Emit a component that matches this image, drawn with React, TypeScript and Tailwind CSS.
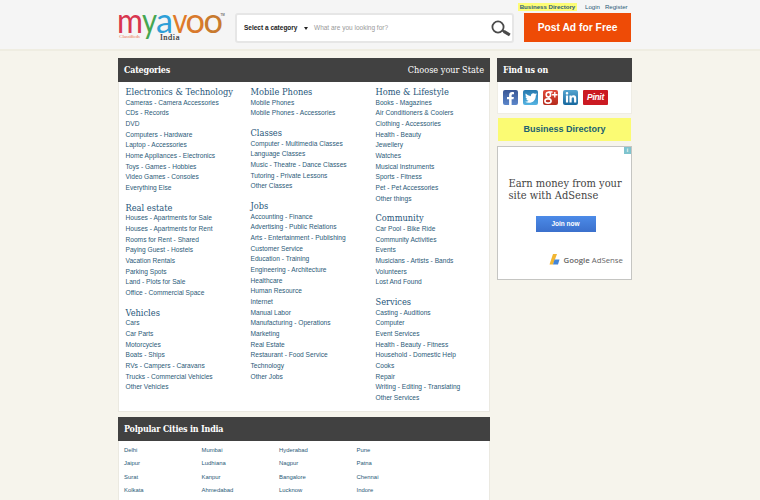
import React from "react";
import { FaFacebookF, FaTwitter } from "react-icons/fa";
import { FaLinkedinIn } from "react-icons/fa6";

type Section = { title: string; items: string[] };

const columns: Section[][] = [
  [
    { title: "Electronics & Technology", items: ["Cameras - Camera Accessories", "CDs - Records", "DVD", "Computers - Hardware", "Laptop - Accessories", "Home Appliances - Electronics", "Toys - Games - Hobbies", "Video Games - Consoles", "Everything Else"] },
    { title: "Real estate", items: ["Houses - Apartments for Sale", "Houses - Apartments for Rent", "Rooms for Rent - Shared", "Paying Guest - Hostels", "Vacation Rentals", "Parking Spots", "Land - Plots for Sale", "Office - Commercial Space"] },
    { title: "Vehicles", items: ["Cars", "Car Parts", "Motorcycles", "Boats - Ships", "RVs - Campers - Caravans", "Trucks - Commercial Vehicles", "Other Vehicles"] },
  ],
  [
    { title: "Mobile Phones", items: ["Mobile Phones", "Mobile Phones - Accessories"] },
    { title: "Classes", items: ["Computer - Multimedia Classes", "Language Classes", "Music - Theatre - Dance Classes", "Tutoring - Private Lessons", "Other Classes"] },
    { title: "Jobs", items: ["Accounting - Finance", "Advertising - Public Relations", "Arts - Entertainment - Publishing", "Customer Service", "Education - Training", "Engineering - Architecture", "Healthcare", "Human Resource", "Internet", "Manual Labor", "Manufacturing - Operations", "Marketing", "Real Estate", "Restaurant - Food Service", "Technology", "Other Jobs"] },
  ],
  [
    { title: "Home & Lifestyle", items: ["Books - Magazines", "Air Conditioners & Coolers", "Clothing - Accessories", "Health - Beauty", "Jewellery", "Watches", "Musical Instruments", "Sports - Fitness", "Pet - Pet Accessories", "Other things"] },
    { title: "Community", items: ["Car Pool - Bike Ride", "Community Activities", "Events", "Musicians - Artists - Bands", "Volunteers", "Lost And Found"] },
    { title: "Services", items: ["Casting - Auditions", "Computer", "Event Services", "Health - Beauty - Fitness", "Household - Domestic Help", "Cooks", "Repair", "Writing - Editing - Translating", "Other Services"] },
  ],
];

const cities = ["Delhi", "Mumbai", "Hyderabad", "Pune", "Jaipur", "Ludhiana", "Nagpur", "Patna", "Surat", "Kanpur", "Bangalore", "Chennai", "Kolkata", "Ahmedabad", "Lucknow", "Indore"];

const serif = "font-['DejaVu_Serif_Condensed','DejaVu_Serif',serif] [font-stretch:condensed]";

const letters = [
  { c: "m", x: -1, w: 26, color: "#d8364f" },
  { c: "y", x: 24, w: 15, color: "#45a651" },
  { c: "a", x: 38, w: 17, color: "#2e9fd8" },
  { c: "v", x: 54.5, w: 15, color: "#e07a28" },
  { c: "o", x: 67.5, w: 19.5, color: "#d97a2c" },
  { c: "o", x: 85.5, w: 19.5, color: "#c87a2e" },
];

function Logo() {
  return (
    <svg className="h-[40px] w-[110px] shrink-0 overflow-visible" viewBox="0 0 110 40">
      {letters.map((l, i) => (
        <text key={i} x={l.x} y="25" textLength={l.w} lengthAdjust="spacingAndGlyphs" fill={l.color} className="font-['Lato',sans-serif] text-[34px]">{l.c}</text>
      ))}
      <text x="1" y="30" textLength="21" fill="#f0a088" className="font-['Liberation_Serif',serif] text-[5px] font-bold">Classifieds</text>
      <text x="42" y="32" textLength="19.5" fill="#333" stroke="#333" strokeWidth="0.2" className="font-['Liberation_Serif',serif] text-[8.5px]">India</text>
      <text x="102.5" y="8" fill="#777" className="font-['Liberation_Sans',sans-serif] text-[3px] font-bold">TM</text>
    </svg>
  );
}

function Bar({ children }: { children: React.ReactNode }) {
  return <div className={`-mx-px -mt-px flex h-6 items-center justify-between bg-[#414141] px-[6px] pt-px text-[9.1px] text-white ${serif}`}>{children}</div>;
}

function Social({ children }: { children: React.ReactNode }) {
  return <div className="flex size-[15px] items-center justify-center overflow-hidden rounded-[2px] text-white">{children}</div>;
}

export default function App() {
  return (
    <div className="h-[500px] w-[760px] overflow-hidden bg-[#f6f4ec] font-['Liberation_Sans',Arial,sans-serif] text-[#2b5a78]">
      <header className="flex h-[51px] items-start border-b-2 border-[#efede2] bg-[#f5f5f5] pl-[118px]">
        <div className="pt-2"><Logo /></div>
        <div className="mt-[13px] ml-[7px] flex h-[30px] w-[279px] items-center rounded-[3px] border-2 border-[#e6e6e6] bg-white pl-[7px] text-[6.5px]">
          <span className="w-[60px] shrink-0 font-bold whitespace-nowrap text-[#222]">Select a category</span>
          <span className="h-0 w-0 border-x-[2.5px] border-t-[3px] border-x-transparent border-t-[#222]" />
          <span className="ml-[6px] flex-1 text-[#999]">What are you looking for?</span>
          <svg className="mr-px h-[17px] w-[20px]" viewBox="0 0 20 17" fill="none" stroke="#4a4a4a">
            <circle cx="7" cy="7" r="5.6" strokeWidth="1.8" />
            <path d="M11.4 10.4l2 1.4" strokeWidth="2" />
            <path d="M12.8 11.4L18.8 15" strokeWidth="3.2" />
          </svg>
        </div>
        <div className="ml-[10px] w-[108px]">
          <div className="flex h-[13px] items-center text-[6.1px] whitespace-nowrap">
            <span className="-ml-[6px] w-[59px] shrink-0 bg-[#fdfd76] text-center leading-[8px] font-bold">Business Directory</span>
            <span className="ml-2">Login</span>
            <span className="ml-[5px]">Register</span>
          </div>
          <div className="flex h-[29px] w-[107px] items-center justify-center bg-[#ee4b06] text-[10.3px] font-bold whitespace-nowrap text-white">Post Ad for Free</div>
        </div>
      </header>

      <div className="flex items-start gap-[7px] pt-[7px] pl-[118px]">
        <main className="flex w-[372px] flex-col gap-[5px]">
          <section className="h-[354px] border border-[#ebe9e1] bg-white">
            <Bar><b className="text-[8.9px] tracking-[-0.2px]">Categories</b><span>Choose your State</span></Bar>
            <div className="grid grid-cols-[125px_125px_1fr] pt-[5px] pl-[6.5px]">
              {columns.map((column, i) => (
                <div key={i} className="flex flex-col gap-[9.2px]">
                  {column.map((s) => (
                    <div key={s.title}>
                      <h3 className={`h-[10.6px] text-[9.2px] leading-[10.33px] whitespace-nowrap text-[#1f567a] ${serif}`}>{s.title}</h3>
                      <ul>
                        {s.items.map((item) => (
                          <li key={item} className="h-[10.66px] text-[6.62px] leading-[10.66px] whitespace-nowrap">{item}</li>
                        ))}
                      </ul>
                    </div>
                  ))}
                </div>
              ))}
            </div>
          </section>
          <section className="h-[120px] border border-[#ebe9e1] bg-white">
            <Bar><b className="text-[8.9px] tracking-[-0.2px]">Polpular Cities in India</b></Bar>
            <div className="grid grid-cols-[77.5px_77.5px_77.5px_1fr] pt-[3px] pl-[5px] text-[5.9px] leading-[13.3px]">
              {cities.map((c) => <span key={c}>{c}</span>)}
            </div>
          </section>
        </main>

        <aside className="w-[135px]">
          <section className="h-[56px] border border-[#efede5] bg-white">
            <Bar><b className="text-[8.9px] tracking-[-0.2px]">Find us on</b></Bar>
            <div className="flex gap-[5px] pt-2 pl-[5px]">
              <Social><span className="flex size-full items-end justify-end bg-linear-to-b from-[#3a5795] to-[#5b86cb] pr-px"><FaFacebookF size={13} /></span></Social>
              <Social><span className="flex size-full items-center justify-center bg-linear-to-b from-[#2578ae] to-[#55b4e2]"><FaTwitter size={12} /></span></Social>
              <Social>
                <svg className="size-full bg-linear-to-b from-[#e04a3a] to-[#b52a1c]" viewBox="0 0 15 15" fill="none" stroke="#fff">
                  <ellipse cx="5.4" cy="4.6" rx="2.2" ry="2.4" strokeWidth="1.6" />
                  <ellipse cx="5" cy="11" rx="3.1" ry="2.1" strokeWidth="1.6" />
                  <path d="M5.5 2h4M5 7l2 2" strokeWidth="1.3" />
                  <path d="M11.8 2v5.4M9.1 4.7h5.4" strokeWidth="1.4" />
                </svg>
              </Social>
              <Social><span className="flex size-full items-center justify-center bg-linear-to-b from-[#55a5d0] to-[#14679e]"><FaLinkedinIn size={12} /></span></Social>
              <div className="flex h-[15px] w-[25px] items-center justify-center rounded-[1px] bg-[#cb1a22] text-[8.5px] font-bold tracking-[-0.3px] whitespace-nowrap text-white italic">Pinit</div>
            </div>
          </section>
          <div className="mx-px mt-[4px] flex h-[23px] items-center justify-center bg-[#fbfb73] text-[9px] font-bold text-[#206070]">Business Directory</div>
          <section className="relative mt-[5px] h-[134px] border border-[#c5c5c2] bg-white pt-[31px] pl-[10.5px] text-[#444]">
            <div className="absolute top-0 right-0 flex size-[7px] items-center justify-center bg-[#7fc4ce] text-[5px] font-bold text-white">i</div>
            <p className={`text-[11px] leading-[12.3px] whitespace-nowrap ${serif}`}>Earn money from your<br />site with AdSense</p>
            <div className="mt-[13px] ml-[27px] flex h-[16px] w-[60px] items-center justify-center bg-linear-to-b from-[#4c8be8] to-[#3b70cc] text-[6.5px] font-bold text-white">Join now</div>
            <div className="mt-[22px] ml-[40px] flex items-center gap-[4px] text-[#666]">
              <svg className="h-[11px] w-[11px]" viewBox="0 0 11 11">
                <path d="M4 0h4L4 10.5H0.5z" fill="#f2b632" />
                <path d="M5.5 5.5H10.5L9 10.5H4z" fill="#4285d8" />
              </svg>
              <span className="font-['Open_Sans',sans-serif] text-[7.8px] leading-[12px] whitespace-nowrap"><span className="font-semibold">Google</span> AdSense</span>
            </div>
          </section>
        </aside>
      </div>
    </div>
  );
}
